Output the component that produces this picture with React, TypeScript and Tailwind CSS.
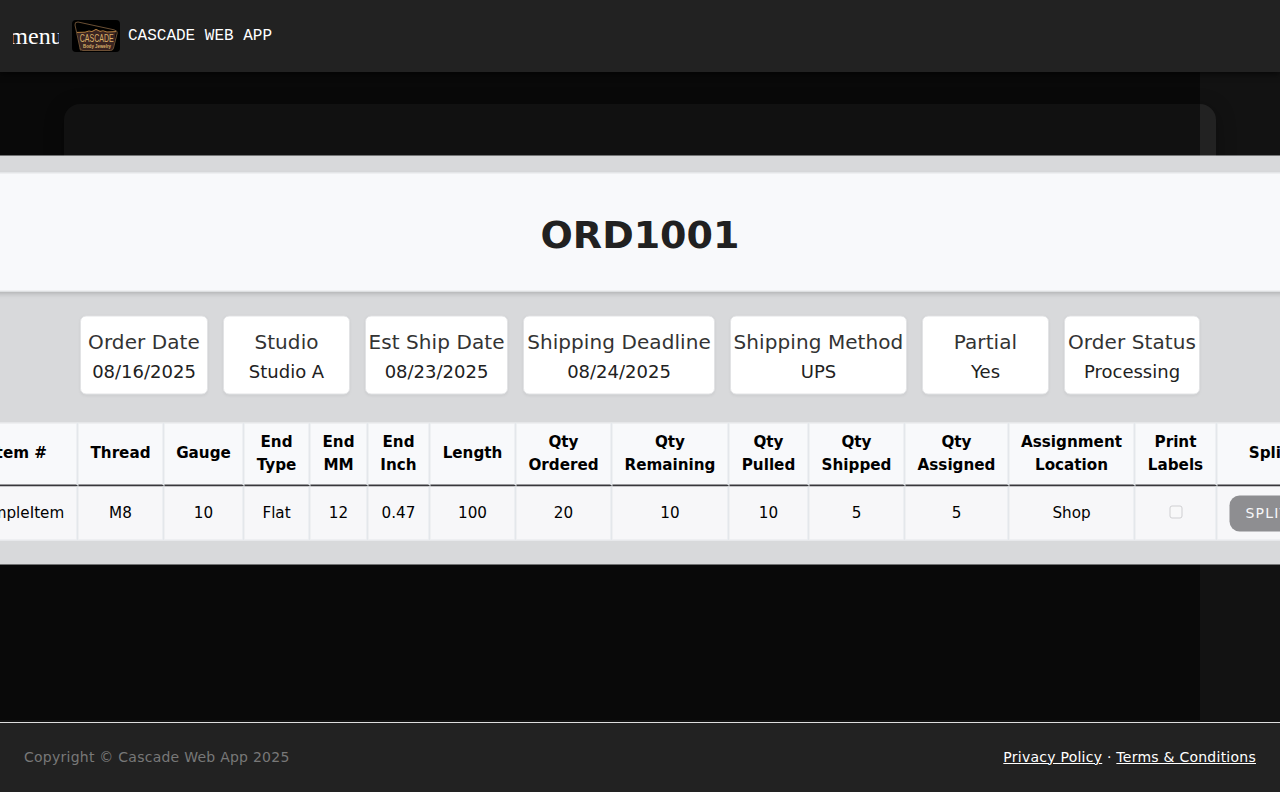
const cards = [
  { label: 'Order Date', value: '08/16/2025', width: 'w-[128px]' },
  { label: 'Studio', value: 'Studio A', width: 'w-[127px]' },
  { label: 'Est Ship Date', value: '08/23/2025', width: 'w-[143px]' },
  { label: 'Shipping Deadline', value: '08/24/2025', width: 'w-[192px]' },
  { label: 'Shipping Method', value: 'UPS', width: 'w-[177px]' },
  { label: 'Partial', value: 'Yes', width: 'w-[127px]' },
  { label: 'Order Status', value: 'Processing', width: 'w-[136px]' },
];

const columns = [
  { head: ['Item #'], value: 'SampleItem', width: 'w-[118px]' },
  { head: ['Thread'], value: 'M8', width: 'w-[86px]' },
  { head: ['Gauge'], value: '10', width: 'w-[80px]' },
  { head: ['End', 'Type'], value: 'Flat', width: 'w-[66px]' },
  { head: ['End', 'MM'], value: '12', width: 'w-[58px]' },
  { head: ['End', 'Inch'], value: '0.47', width: 'w-[62px]' },
  { head: ['Length'], value: '100', width: 'w-[86px]' },
  { head: ['Qty', 'Ordered'], value: '20', width: 'w-[96px]' },
  { head: ['Qty', 'Remaining'], value: '10', width: 'w-[117px]' },
  { head: ['Qty', 'Pulled'], value: '10', width: 'w-[80px]' },
  { head: ['Qty', 'Shipped'], value: '5', width: 'w-[96px]' },
  { head: ['Qty', 'Assigned'], value: '5', width: 'w-[104px]' },
  { head: ['Assignment', 'Location'], value: 'Shop', width: 'w-[126px]' },
  { head: ['Print', 'Labels'], value: 'checkbox', width: 'w-[82px]' },
  { head: ['Split'], value: 'split', width: 'w-[104px]' },
];

function Logo() {
  return (
    <svg viewBox="0 0 48 32" className="h-8 w-12 rounded" aria-hidden="true">
      <rect width="48" height="32" fill="#000" />
      <path d="M5 12 L13 12.5 L18 11.5 L24 9 L30 11.5 L36 12 L44 11 L41.5 28 Q41 30.5 38.5 30.5 L11 30.5 Q8.5 30.5 8 28 Z" fill="#3a2421" />
      <path d="M8.5 30.5 L3 5 Q2.5 1.8 6 2 L42 9.8 Q45.6 10.6 45.2 13 L41.5 28 Q41 30.5 38.5 30.5 L11 30.5 Q8.5 30.5 8 28" fill="none" stroke="#76583a" strokeWidth="0.9" />
      <path d="M5 12.4 L13 12.2 L17 11 L20 11.6 L24 9.4 L28 11.4 L31 10.8 L35 12 L44 11.6" fill="none" stroke="#b5803f" strokeWidth="1" />
      <text x="7.8" y="22.2" textLength="33.8" lengthAdjust="spacingAndGlyphs" fill="#d9b06a" fontFamily="Liberation Sans" fontSize="10.5">CASCADE</text>
      <text x="11" y="28.4" textLength="28" lengthAdjust="spacingAndGlyphs" fill="#d9b06a" fontFamily="Liberation Sans" fontWeight="700" fontSize="6.2">Body Jewelry</text>
    </svg>
  );
}

function Cell({ value }: { value: string }) {
  if (value === 'checkbox') {
    return <span className="mx-auto mb-[3px] block size-[13px] rounded-[2.5px] border border-[#cfcfd2] bg-[#f8f8f9]" />;
  }
  if (value === 'split') {
    return (
      <button className="block h-9 w-[76px] rounded-[10px] bg-[#8e8e91] text-[14px] tracking-[1.25px] text-[#f7f7f9]">
        SPLIT
      </button>
    );
  }
  return <>{value}</>;
}

export default function App() {
  return (
    <div className="relative flex h-[792px] w-[1280px] flex-col overflow-hidden bg-[#121212] font-['DejaVu_Sans',sans-serif]">
      <header className="z-10 flex h-18 shrink-0 items-center bg-[#222222] pl-3 shadow-[0_2px_6px_rgba(0,0,0,0.6)]">
        <button className="mx-px flex h-12 w-[46px] items-center justify-center overflow-hidden font-['Liberation_Serif',serif] text-2xl leading-6 text-white">
          menu
        </button>
        <div className="ml-3 flex items-center gap-2">
          <Logo />
          <span className="font-['Liberation_Mono',monospace] text-base leading-6 text-white">CASCADE WEB APP</span>
        </div>
      </header>

      <main className="min-h-0 flex-1 px-16 pt-8">
        <div className="h-[500px] rounded-2xl bg-[#222222] shadow-[0_4px_20px_rgba(0,0,0,0.3)] [clip-path:inset(-30px_-30px_150px_-30px)]" />
      </main>

      <footer className="z-10 flex h-[70px] shrink-0 items-center justify-between border-t border-[#dedede] bg-[#222222] px-6 pb-0.5 text-[14px] leading-5 tracking-[0.25px]">
        <span className="text-[#787878]">Copyright © Cascade Web App 2025</span>
        <span className="text-white">
          <a className="underline" href="#privacy">Privacy Policy</a> · <a className="underline" href="#terms">Terms &amp; Conditions</a>
        </span>
      </footer>

      <div className="absolute top-[72px] left-0 h-[648px] w-[1200px] bg-black/50" />

      <section className="absolute top-[155px] left-[-40px] z-20 w-[1360px] translate-y-[0.5px] bg-[#d8d9db] pt-[17px] pb-6 text-[#212121]">
        <div className="flex h-[119px] items-center justify-center border-y border-[#e4e5e8] bg-[#f8f9fb] pt-[5px] shadow-[0_2px_5px_rgba(0,0,0,0.2)]">
          <h1 className="text-[38px] leading-[48px] font-bold">ORD1001</h1>
        </div>

        <div className="mt-6 flex justify-center gap-[15px]">
          {cards.map((card) => (
            <div key={card.label} className={`flex h-[79px] shrink-0 flex-col items-center rounded-[6px] border border-[#e2e3e5] bg-white pt-[9px] whitespace-nowrap shadow-[0_1px_3px_rgba(0,0,0,0.06)] ${card.width}`}>
              <span className="text-[20px] leading-8 tracking-[0.08px] text-[#333333]">{card.label}</span>
              <span className="text-[18px] leading-[28px]">{card.value}</span>
            </div>
          ))}
        </div>

        <table className="mt-[28px] w-[1361px] translate-x-[0.5px] table-fixed border-separate border-spacing-0 text-[15.2px] leading-[22.8px] text-black">
          <thead>
            <tr className="h-[64px]">
              {columns.map((col) => (
                <th key={col.head.join(' ')} className={`border-t border-r-2 border-b-2 border-t-[#e4e5e8] border-r-[#e4e7eb] border-b-[#38383c] bg-[#f8f9fb] p-0 align-middle font-bold whitespace-nowrap ${col.head.length === 1 ? 'pb-[3px]' : 'pb-px'} ${col.width}`}>
                  {col.head.map((line) => (
                    <div key={line}>{line}</div>
                  ))}
                </th>
              ))}
            </tr>
          </thead>
          <tbody>
            <tr className="h-[54px]">
              {columns.map((col) => (
                <td key={col.head.join(' ')} className="border-r-2 border-b border-r-[#e4e7eb] border-b-[#e6e8eb] bg-[#f7f7f9] px-3 py-0 text-center align-middle">
                  <Cell value={col.value} />
                </td>
              ))}
            </tr>
          </tbody>
        </table>
      </section>
    </div>
  );
}
